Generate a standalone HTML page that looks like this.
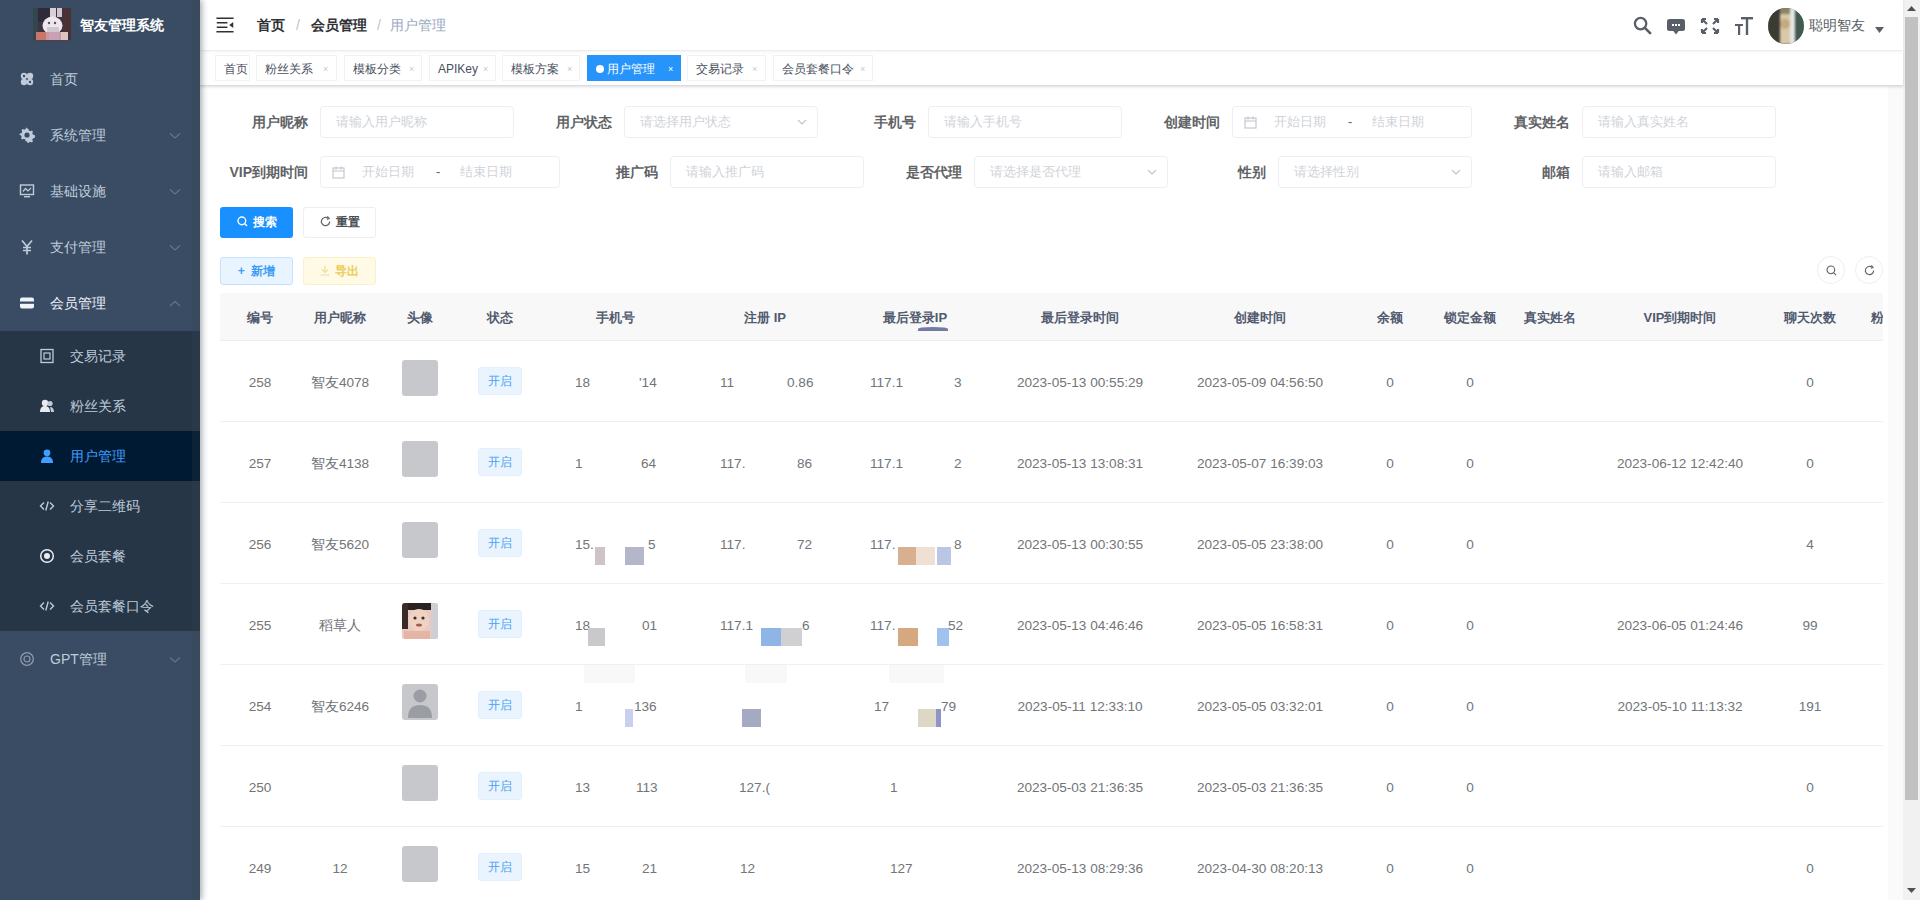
<!DOCTYPE html>
<html><head><meta charset="utf-8">
<style>
*{box-sizing:border-box}
html,body{margin:0;padding:0}
body{width:1920px;height:900px;overflow:hidden;position:relative;background:#fff;font-family:"Liberation Sans",sans-serif;color:#606266;-webkit-font-smoothing:antialiased}
.abs{position:absolute}
#sb{position:absolute;left:0;top:0;width:200px;height:900px;background:#394c64;box-shadow:2px 0 6px rgba(0,21,41,.35);z-index:5}
.mi{position:absolute;left:0;width:200px;height:56px;line-height:56px;color:#bfcbd9;font-size:14px}
.mi .ic{position:absolute;left:19px;top:20px;width:16px;height:16px}
.mi .tx{position:absolute;left:50px;top:0}
.mi .ar{position:absolute;left:169px;top:25px}
.sub{position:absolute;left:0;width:200px;height:50px;line-height:50px;color:#bfcbd9;font-size:14px;background:#263647}
.sub .ic{position:absolute;left:39px;top:17px;width:16px;height:16px}
.sub .tx{position:absolute;left:70px;top:0}
.sub.act{background:#011a33;color:#409eff}
#nav{position:absolute;left:200px;top:0;width:1703px;height:50px;background:#fff;box-shadow:0 1px 4px rgba(0,21,41,.08);z-index:2}
#tags{position:absolute;left:200px;top:51px;width:1703px;height:35px;background:#fff;border-bottom:1px solid #d8dce5;box-shadow:0 1px 3px 0 rgba(0,0,0,.12),0 0 3px 0 rgba(0,0,0,.04);z-index:1}
.tg{position:absolute;top:4px;height:26px;line-height:26px;border:1px solid #f1f2f4;color:#495060;background:#fff;font-size:12px;padding:0 0 0 8px;white-space:nowrap}
.tg .x{position:absolute;font-size:9px;color:#c5c8ce;top:0}
.tg.act{background:#2794fb;border-color:#2794fb;color:#fff}
.lbl{position:absolute;width:100px;height:32px;line-height:32px;text-align:right;padding-right:12px;font-size:14px;font-weight:bold;color:#606266}
.inp{position:absolute;height:32px;line-height:30px;border:1px solid #eceef1;border-radius:4px;background:#fff;font-size:13px;color:#d0d3d8;padding-left:15px;white-space:nowrap;overflow:hidden}
.inp .ph{position:absolute;top:0}
.btn{position:absolute;border-radius:3px;font-size:12px;white-space:nowrap;text-align:center}
.th{position:absolute;top:294px;height:47px;line-height:47px;text-align:center;font-size:13px;font-weight:bold;color:#515a6e;white-space:nowrap;overflow:hidden}
.td{position:absolute;height:20px;line-height:20px;text-align:center;font-size:13.6px;color:#727579;white-space:nowrap}
.fr{position:absolute;height:20px;line-height:20px;font-size:13.6px;color:#727579;white-space:nowrap}
.sq{position:absolute;height:18px}
.rline{position:absolute;left:220px;width:1663px;height:1px;background:#eef0f3}
.av{position:absolute;left:402px;width:36px;height:36px;border-radius:3px;background:#c6c8cc;overflow:hidden}
.tag{position:absolute;left:478px;width:44px;height:28px;line-height:26px;text-align:center;border:1px solid #e3f0fc;background:#e9f4fe;color:#4a9ff5;font-size:12px;border-radius:3px}
</style></head>
<body>

<!-- SIDEBAR -->
<div id="sb">
  <div class="abs" style="left:33px;top:8px;width:38px;height:34px;overflow:hidden">
    <svg width="38" height="34" viewBox="0 0 38 34"><rect width="38" height="34" fill="#3e3440"/><rect x="0" y="0" width="5" height="34" fill="#34454e"/><rect x="30" y="0" width="8" height="30" fill="#4a3234"/><rect x="5" y="0" width="12" height="14" fill="#2f2a3a"/><rect x="17" y="0" width="6" height="9" fill="#d8d0d6"/><rect x="24" y="0" width="5" height="9" fill="#cfc6cf"/><ellipse cx="19.5" cy="17.5" rx="10" ry="9" fill="#efe6ee"/><rect x="14" y="19" width="12" height="6" fill="#cfc8cf"/><circle cx="16" cy="15" r="1.2" fill="#5a5060"/><circle cx="22" cy="15" r="1.2" fill="#5a5060"/><rect x="3" y="24" width="32" height="9" fill="#c99a9a"/><rect x="3" y="24" width="10" height="9" fill="#c8766a"/><rect x="16" y="24" width="10" height="9" fill="#c9a0b8"/><rect x="28" y="24" width="7" height="9" fill="#d9c6c0"/><rect x="0" y="32" width="38" height="2" fill="#4a4450"/></svg>
  </div>
  <div class="abs" style="left:80px;top:0;height:50px;line-height:50px;color:#fff;font-weight:bold;font-size:14px;white-space:nowrap">智友管理系统</div>

  <div class="mi" style="top:51px"><svg class="ic" viewBox="0 0 16 16"><g fill="#bfcbd9"><circle cx="5" cy="5" r="3.2"/><circle cx="11" cy="5" r="3.2"/><circle cx="5" cy="11" r="3.2"/><circle cx="11" cy="11" r="3.2"/></g><g fill="#394c64"><circle cx="5" cy="5" r="1.2"/><circle cx="11" cy="11" r="1.2"/></g></svg><span class="tx">首页</span></div>
  <div class="mi" style="top:107px"><svg class="ic" viewBox="0 0 16 16"><path fill="#bfcbd9" d="M8 1.5l1.4.3.4 1.6 1.5.8 1.6-.6 1 1 -.6 1.6.8 1.5 1.6.4.3 1.4-.3 1.4-1.6.4-.8 1.5.6 1.6-1 1-1.6-.6-1.5.8-.4 1.6L8 14.5l-1.4-.3-.4-1.6-1.5-.8-1.6.6-1-1 .6-1.6-.8-1.5-1.6-.4L.5 8l.3-1.4 1.6-.4.8-1.5-.6-1.6 1-1 1.6.6 1.5-.8.4-1.6z"/><circle cx="8" cy="8" r="2.6" fill="#394c64"/></svg><span class="tx">系统管理</span><svg class="ar" width="12" height="8" viewBox="0 0 12 8"><path d="M1 1.5l5 4.5 5-4.5" stroke="#66768a" stroke-width="1.1" fill="none"/></svg></div>
  <div class="mi" style="top:163px"><svg class="ic" viewBox="0 0 16 16"><rect x="1.5" y="2" width="13" height="9.5" fill="none" stroke="#bfcbd9" stroke-width="1.4"/><path d="M4 8.5l2.5-3 2.5 2.5 3-3" stroke="#bfcbd9" stroke-width="1.2" fill="none"/><rect x="5" y="13" width="6" height="1.4" fill="#bfcbd9"/></svg><span class="tx">基础设施</span><svg class="ar" width="12" height="8" viewBox="0 0 12 8"><path d="M1 1.5l5 4.5 5-4.5" stroke="#66768a" stroke-width="1.1" fill="none"/></svg></div>
  <div class="mi" style="top:219px"><svg class="ic" viewBox="0 0 16 16"><path d="M3 1.5l5 6 5-6M8 7.5v8M4 8.5h8M4 11.5h8" stroke="#bfcbd9" stroke-width="1.7" fill="none"/></svg><span class="tx">支付管理</span><svg class="ar" width="12" height="8" viewBox="0 0 12 8"><path d="M1 1.5l5 4.5 5-4.5" stroke="#66768a" stroke-width="1.1" fill="none"/></svg></div>
  <div class="mi" style="top:275px;color:#fff"><svg class="ic" viewBox="0 0 16 16"><rect x="1" y="2.5" width="14" height="11" rx="2" fill="#f0f3f7"/><rect x="1" y="6.5" width="14" height="2.3" fill="#394c64"/></svg><span class="tx" style="color:#eef2f6">会员管理</span><svg class="ar" width="12" height="8" viewBox="0 0 12 8"><path d="M1 6l5-4.5 5 4.5" stroke="#66768a" stroke-width="1.1" fill="none"/></svg></div>

  <div class="sub" style="top:331px"><svg class="ic" viewBox="0 0 16 16"><rect x="2" y="1.5" width="12" height="13" fill="none" stroke="#bfcbd9" stroke-width="1.3"/><rect x="5" y="5" width="6" height="6" fill="none" stroke="#bfcbd9" stroke-width="1.2"/></svg><span class="tx">交易记录</span></div>
  <div class="sub" style="top:381px"><svg class="ic" viewBox="0 0 16 16"><circle cx="6" cy="5" r="3.2" fill="#e8ecf1"/><path d="M1 14c0-4 2-6 5-6s5 2 5 6z" fill="#e8ecf1"/><circle cx="11" cy="5.5" r="2.6" fill="#bfcbd9"/><path d="M11 9c2.5 0 4 1.5 4 5h-3z" fill="#bfcbd9"/></svg><span class="tx">粉丝关系</span></div>
  <div class="sub act" style="top:431px"><svg class="ic" viewBox="0 0 16 16"><circle cx="8" cy="4.8" r="3.4" fill="#409eff"/><path d="M2 15c0-4.5 2.5-6.5 6-6.5s6 2 6 6.5z" fill="#409eff"/></svg><span class="tx">用户管理</span></div>
  <div class="sub" style="top:481px"><svg class="ic" viewBox="0 0 16 16"><path d="M5 4.5L1.5 8 5 11.5M11 4.5L14.5 8 11 11.5M9.2 3.5l-2.4 9" stroke="#bfcbd9" stroke-width="1.4" fill="none"/></svg><span class="tx">分享二维码</span></div>
  <div class="sub" style="top:531px"><svg class="ic" viewBox="0 0 16 16"><circle cx="8" cy="8" r="6.3" fill="none" stroke="#e8ecf1" stroke-width="1.5"/><circle cx="8" cy="8" r="3" fill="#e8ecf1"/></svg><span class="tx">会员套餐</span></div>
  <div class="sub" style="top:581px"><svg class="ic" viewBox="0 0 16 16"><path d="M5 4.5L1.5 8 5 11.5M11 4.5L14.5 8 11 11.5M9.2 3.5l-2.4 9" stroke="#bfcbd9" stroke-width="1.4" fill="none"/></svg><span class="tx">会员套餐口令</span></div>
  <div class="mi" style="top:631px"><svg class="ic" viewBox="0 0 16 16"><circle cx="8" cy="8" r="6.3" fill="none" stroke="#8e9bab" stroke-width="1.3"/><circle cx="8" cy="8" r="3" fill="none" stroke="#8e9bab" stroke-width="1.2"/></svg><span class="tx">GPT管理</span><svg class="ar" width="12" height="8" viewBox="0 0 12 8"><path d="M1 1.5l5 4.5 5-4.5" stroke="#66768a" stroke-width="1.1" fill="none"/></svg></div>
</div>

<div class="abs" style="left:192px;top:0;width:8px;height:900px;background:rgba(60,66,72,.22);z-index:6"></div>
<!-- NAVBAR -->
<div id="nav">
  <svg class="abs" style="left:14px;top:14px" width="22" height="22" viewBox="0 0 1024 1024"><g transform="rotate(180 512 512)"><path fill="#303133" d="M408 442h480c4.4 0 8-3.6 8-8v-56c0-4.4-3.6-8-8-8H408c-4.4 0-8 3.6-8 8v56c0 4.4 3.6 8 8 8zm-8 204c0 4.4 3.6 8 8 8h480c4.4 0 8-3.6 8-8v-56c0-4.4-3.6-8-8-8H408c-4.4 0-8 3.6-8 8v56zm504-486H120c-4.4 0-8 3.6-8 8v56c0 4.4 3.6 8 8 8h784c4.4 0 8-3.6 8-8v-56c0-4.4-3.6-8-8-8zm0 632H120c-4.4 0-8 3.6-8 8v56c0 4.4 3.6 8 8 8h784c4.4 0 8-3.6 8-8v-56c0-4.4-3.6-8-8-8zM142.4 642.1L298.7 519a8.840 8.840 0 0 0 0-13.9L142.4 381.9c-5.8-4.6-14.400-.5-14.4 6.9v246.3a8.900 8.900 0 0 0 14.4 7z"/></g></svg>
  <div class="abs" style="left:57px;top:0;height:50px;line-height:50px;font-size:14px;white-space:nowrap">
    <span style="color:#303133;font-weight:bold">首页</span><span style="color:#c0c4cc;margin:0 11px">/</span><span style="color:#303133;font-weight:bold">会员管理</span><span style="color:#c0c4cc;margin:0 9px 0 10px">/</span><span style="color:#97a8be">用户管理</span>
  </div>
  <!-- right icons -->
  <svg class="abs" style="left:1433px;top:16px" width="19" height="19" viewBox="0 0 20 20"><circle cx="8" cy="8" r="6" fill="none" stroke="#5a5e66" stroke-width="2.4"/><path d="M12.5 12.5L18 18" stroke="#5a5e66" stroke-width="2.8" stroke-linecap="round"/></svg>
  <svg class="abs" style="left:1467px;top:18px" width="18" height="18" viewBox="0 0 18 18"><rect x="0" y="1" width="18" height="12" rx="2.5" fill="#5a5e66"/><path d="M6 12.5l3 4 3-4z" fill="#5a5e66"/><rect x="5" y="6" width="2" height="2" fill="#fff"/><rect x="8" y="6" width="2" height="2" fill="#fff"/><rect x="11" y="6" width="2" height="2" fill="#fff"/></svg>
  <svg class="abs" style="left:1500px;top:17px" width="20" height="18" viewBox="0 0 20 18"><g stroke="#5a5e66" stroke-width="2.2" fill="none"><path d="M2 2l5 5M2 2h4M2 2v4"/><path d="M18 2l-5 5M18 2h-4M18 2v4"/><path d="M2 16l5-5M2 16h4M2 16v-4"/><path d="M18 16l-5-5M18 16h-4M18 16v-4"/></g></svg>
  <svg class="abs" style="left:1535px;top:17px" width="18" height="18" viewBox="0 0 18 18"><g fill="#5a5e66"><rect x="6" y="0" width="12" height="2.4"/><rect x="10.8" y="0" width="2.4" height="18"/><rect x="0" y="7" width="8" height="2"/><rect x="3" y="7" width="2.2" height="11"/></g></svg>
  <div class="abs" style="left:1568px;top:8px;width:36px;height:36px;border-radius:50%;overflow:hidden;background:#6f6a58">
    <svg style="filter:blur(0.8px)" width="36" height="36" viewBox="0 0 36 36"><rect width="36" height="36" fill="#8d8468"/><rect x="0" y="0" width="12" height="36" fill="#3b3a33"/><rect x="12" y="6" width="10" height="30" fill="#d8c9a8"/><rect x="22" y="0" width="5" height="36" fill="#e6e6e6"/><rect x="27" y="0" width="9" height="36" fill="#405a50"/><circle cx="17" cy="16" r="5" fill="#c4a880"/></svg>
  </div>
  <div class="abs" style="left:1609px;top:0;height:50px;line-height:50px;font-size:14px;color:#5a5e66;white-space:nowrap">聪明智友</div>
  <svg class="abs" style="left:1675px;top:27px" width="9" height="6" viewBox="0 0 9 6"><path d="M0 0h9L4.5 6z" fill="#5a5e66"/></svg>
</div>

<!-- TAGS -->
<div id="tags">
  <div class="tg" style="left:15px;width:35px">首页</div>
  <div class="tg" style="left:56px;width:81px">粉丝关系<span class="x" style="left:66px">×</span></div>
  <div class="tg" style="left:144px;width:78px">模板分类<span class="x" style="left:64px">×</span></div>
  <div class="tg" style="left:229px;width:67px">APIKey<span class="x" style="left:53px">×</span></div>
  <div class="tg" style="left:302px;width:78px">模板方案<span class="x" style="left:64px">×</span></div>
  <div class="tg act" style="left:387px;width:94px"><span style="display:inline-block;width:8px;height:8px;border-radius:50%;background:#fff;margin-right:3px;vertical-align:-0px"></span>用户管理<span class="x" style="left:80px;color:#fff">×</span></div>
  <div class="tg" style="left:487px;width:79px">交易记录<span class="x" style="left:64px">×</span></div>
  <div class="tg" style="left:573px;width:100px">会员套餐口令<span class="x" style="left:86px">×</span></div>
</div>

<!-- FORM -->
<div class="lbl" style="left:220px;top:106px">用户昵称</div>
<div class="inp" style="left:320px;top:106px;width:194px">请输入用户昵称</div>
<div class="lbl" style="left:524px;top:106px">用户状态</div>
<div class="inp" style="left:624px;top:106px;width:194px">请选择用户状态<svg class="abs" style="left:172px;top:12px" width="10" height="7" viewBox="0 0 10 7"><path d="M1 1l4 4 4-4" stroke="#c0c4cc" stroke-width="1.2" fill="none"/></svg></div>
<div class="lbl" style="left:828px;top:106px">手机号</div>
<div class="inp" style="left:928px;top:106px;width:194px">请输入手机号</div>
<div class="lbl" style="left:1132px;top:106px">创建时间</div>
<div class="inp" style="left:1232px;top:106px;width:240px;padding-left:10px"><svg class="abs" style="left:11px;top:9px" width="13" height="13" viewBox="0 0 13 13"><rect x="1" y="2" width="11" height="10" fill="none" stroke="#c0c4cc" stroke-width="1.1"/><path d="M1 5h11M4 0.5v3M9 0.5v3" stroke="#c0c4cc" stroke-width="1.1"/></svg><span class="ph" style="left:41px">开始日期</span><span class="ph" style="left:115px;color:#606266">-</span><span class="ph" style="left:139px">结束日期</span></div>
<div class="lbl" style="left:1482px;top:106px">真实姓名</div>
<div class="inp" style="left:1582px;top:106px;width:194px">请输入真实姓名</div>

<div class="lbl" style="left:220px;top:156px">VIP到期时间</div>
<div class="inp" style="left:320px;top:156px;width:240px;padding-left:10px"><svg class="abs" style="left:11px;top:9px" width="13" height="13" viewBox="0 0 13 13"><rect x="1" y="2" width="11" height="10" fill="none" stroke="#c0c4cc" stroke-width="1.1"/><path d="M1 5h11M4 0.5v3M9 0.5v3" stroke="#c0c4cc" stroke-width="1.1"/></svg><span class="ph" style="left:41px">开始日期</span><span class="ph" style="left:115px;color:#606266">-</span><span class="ph" style="left:139px">结束日期</span></div>
<div class="lbl" style="left:570px;top:156px">推广码</div>
<div class="inp" style="left:670px;top:156px;width:194px">请输入推广码</div>
<div class="lbl" style="left:874px;top:156px">是否代理</div>
<div class="inp" style="left:974px;top:156px;width:194px">请选择是否代理<svg class="abs" style="left:172px;top:12px" width="10" height="7" viewBox="0 0 10 7"><path d="M1 1l4 4 4-4" stroke="#c0c4cc" stroke-width="1.2" fill="none"/></svg></div>
<div class="lbl" style="left:1178px;top:156px">性别</div>
<div class="inp" style="left:1278px;top:156px;width:194px">请选择性别<svg class="abs" style="left:172px;top:12px" width="10" height="7" viewBox="0 0 10 7"><path d="M1 1l4 4 4-4" stroke="#c0c4cc" stroke-width="1.2" fill="none"/></svg></div>
<div class="lbl" style="left:1482px;top:156px">邮箱</div>
<div class="inp" style="left:1582px;top:156px;width:194px">请输入邮箱</div>

<!-- BUTTONS -->
<div class="btn" style="left:220px;top:207px;width:73px;height:31px;line-height:31px;background:#1890ff;color:#fff;font-weight:bold"><svg style="vertical-align:-1px;margin-right:5px" width="11" height="11" viewBox="0 0 12 12"><circle cx="5.3" cy="5.3" r="4.2" fill="none" stroke="#fff" stroke-width="1.5"/><path d="M8.5 8.5l2.5 2.5" stroke="#fff" stroke-width="1.5"/></svg>搜索</div>
<div class="btn" style="left:303px;top:207px;width:73px;height:31px;line-height:29px;background:#fff;border:1px solid #eceef1;color:#4a4d52;font-weight:bold"><svg style="vertical-align:-1px;margin-right:5px" width="11" height="11" viewBox="0 0 12 12"><path d="M10.5 6A4.5 4.5 0 1 1 8.8 2.5" fill="none" stroke="#606266" stroke-width="1.3"/><path d="M8 0.5l2 2.2-2.4 1" fill="none" stroke="#606266" stroke-width="1.2"/></svg>重置</div>
<div class="btn" style="left:220px;top:257px;width:73px;height:28px;line-height:26px;background:#e8f4ff;border:1px solid #c6e2fb;color:#3d9cf5;font-weight:bold">+&nbsp; 新增</div>
<div class="btn" style="left:303px;top:257px;width:73px;height:28px;line-height:26px;background:#fefae6;border:1px solid #fbf0c8;color:#eccb55;font-weight:bold"><svg style="vertical-align:-1px;margin-right:5px" width="10" height="11" viewBox="0 0 10 11"><path d="M5 0.5v7M2 4.5l3 3 3-3M0.5 10h9" stroke="#f0dc9a" stroke-width="1.2" fill="none"/></svg>导出</div>
<div class="abs" style="left:1817px;top:256px;width:28px;height:28px;border-radius:50%;border:1px solid #eceef1;background:#fff"><svg class="abs" style="left:8px;top:8px" width="11" height="11" viewBox="0 0 12 12"><circle cx="5.3" cy="5.3" r="4.2" fill="none" stroke="#606266" stroke-width="1.2"/><path d="M8.5 8.5l2.5 2.5" stroke="#606266" stroke-width="1.2"/></svg></div>
<div class="abs" style="left:1855px;top:256px;width:28px;height:28px;border-radius:50%;border:1px solid #eceef1;background:#fff"><svg class="abs" style="left:8px;top:8px" width="11" height="11" viewBox="0 0 12 12"><path d="M10.5 6A4.5 4.5 0 1 1 8.8 2.5" fill="none" stroke="#606266" stroke-width="1.2"/><path d="M8 0.5l2 2.2-2.4 1" fill="none" stroke="#606266" stroke-width="1.1"/></svg></div>

<!-- TABLE -->
<div class="abs" style="left:220px;top:293px;width:1663px;height:48px;background:#f8f8f9;border-bottom:1px solid #eceef2"></div>
<div class="abs" style="left:918px;top:327px;width:30px;height:4px;border-radius:50% 50% 0 0;background:#515a8e;opacity:.8"></div>
<div style="position:absolute;left:0;top:0;width:1883px;height:900px;overflow:hidden">
<div class="th" style="left:220px;width:80px">编号</div>
<div class="th" style="left:300px;width:80px">用户昵称</div>
<div class="th" style="left:380px;width:80px">头像</div>
<div class="th" style="left:460px;width:80px">状态</div>
<div class="th" style="left:540px;width:150px">手机号</div>
<div class="th" style="left:690px;width:150px">注册 IP</div>
<div class="th" style="left:840px;width:150px">最后登录IP</div>
<div class="th" style="left:990px;width:180px">最后登录时间</div>
<div class="th" style="left:1170px;width:180px">创建时间</div>
<div class="th" style="left:1350px;width:80px">余额</div>
<div class="th" style="left:1430px;width:80px">锁定金额</div>
<div class="th" style="left:1510px;width:80px">真实姓名</div>
<div class="th" style="left:1590px;width:180px">VIP到期时间</div>
<div class="th" style="left:1770px;width:80px">聊天次数</div>
<div class="th" style="left:1850px;width:80px">粉丝数</div>
<div class="rline" style="top:421px"></div>
<div class="td" style="left:220px;width:80px;top:373px">258</div>
<div class="td" style="left:300px;width:80px;top:373px">智友4078</div>
<div class="av" style="top:360px"></div>
<div class="tag" style="top:367px">开启</div>
<div class="td" style="left:990px;width:180px;top:373px">2023-05-13 00:55:29</div>
<div class="td" style="left:1170px;width:180px;top:373px">2023-05-09 04:56:50</div>
<div class="td" style="left:1350px;width:80px;top:373px">0</div>
<div class="td" style="left:1430px;width:80px;top:373px">0</div>
<div class="td" style="left:1770px;width:80px;top:373px">0</div>
<div class="rline" style="top:502px"></div>
<div class="td" style="left:220px;width:80px;top:454px">257</div>
<div class="td" style="left:300px;width:80px;top:454px">智友4138</div>
<div class="av" style="top:441px"></div>
<div class="tag" style="top:448px">开启</div>
<div class="td" style="left:990px;width:180px;top:454px">2023-05-13 13:08:31</div>
<div class="td" style="left:1170px;width:180px;top:454px">2023-05-07 16:39:03</div>
<div class="td" style="left:1350px;width:80px;top:454px">0</div>
<div class="td" style="left:1430px;width:80px;top:454px">0</div>
<div class="td" style="left:1590px;width:180px;top:454px">2023-06-12 12:42:40</div>
<div class="td" style="left:1770px;width:80px;top:454px">0</div>
<div class="rline" style="top:583px"></div>
<div class="td" style="left:220px;width:80px;top:535px">256</div>
<div class="td" style="left:300px;width:80px;top:535px">智友5620</div>
<div class="av" style="top:522px"></div>
<div class="tag" style="top:529px">开启</div>
<div class="td" style="left:990px;width:180px;top:535px">2023-05-13 00:30:55</div>
<div class="td" style="left:1170px;width:180px;top:535px">2023-05-05 23:38:00</div>
<div class="td" style="left:1350px;width:80px;top:535px">0</div>
<div class="td" style="left:1430px;width:80px;top:535px">0</div>
<div class="td" style="left:1770px;width:80px;top:535px">4</div>
<div class="rline" style="top:664px"></div>
<div class="td" style="left:220px;width:80px;top:616px">255</div>
<div class="td" style="left:300px;width:80px;top:616px">稻草人</div>
<div class="av ph" style="top:603px"><svg style="filter:blur(0.6px)" width="36" height="36" viewBox="0 0 36 36"><rect width="36" height="36" fill="#e9c9c0"/><rect x="0" y="0" width="36" height="7" fill="#2a2222"/><rect x="0" y="0" width="6" height="26" fill="#3a2a28"/><rect x="29" y="0" width="7" height="36" fill="#cfcfd3"/><ellipse cx="17" cy="17" rx="10" ry="11" fill="#f0d2c2"/><circle cx="13" cy="15" r="1.6" fill="#3b2a2a"/><circle cx="21" cy="15" r="1.6" fill="#3b2a2a"/><ellipse cx="17" cy="22" rx="3" ry="1.6" fill="#a55a50"/><rect x="2" y="28" width="26" height="8" fill="#e4b4a6"/></svg></div>
<div class="tag" style="top:610px">开启</div>
<div class="td" style="left:990px;width:180px;top:616px">2023-05-13 04:46:46</div>
<div class="td" style="left:1170px;width:180px;top:616px">2023-05-05 16:58:31</div>
<div class="td" style="left:1350px;width:80px;top:616px">0</div>
<div class="td" style="left:1430px;width:80px;top:616px">0</div>
<div class="td" style="left:1590px;width:180px;top:616px">2023-06-05 01:24:46</div>
<div class="td" style="left:1770px;width:80px;top:616px">99</div>
<div class="rline" style="top:745px"></div>
<div class="td" style="left:220px;width:80px;top:697px">254</div>
<div class="td" style="left:300px;width:80px;top:697px">智友6246</div>
<div class="av" style="top:684px"><svg width="36" height="36" viewBox="0 0 36 36"><circle cx="18" cy="12" r="6.5" fill="#9a9da3"/><path d="M6 34 C6 24 11 21 18 21 C25 21 30 24 30 34 Z" fill="#9a9da3"/></svg></div>
<div class="tag" style="top:691px">开启</div>
<div class="td" style="left:990px;width:180px;top:697px">2023-05-11 12:33:10</div>
<div class="td" style="left:1170px;width:180px;top:697px">2023-05-05 03:32:01</div>
<div class="td" style="left:1350px;width:80px;top:697px">0</div>
<div class="td" style="left:1430px;width:80px;top:697px">0</div>
<div class="td" style="left:1590px;width:180px;top:697px">2023-05-10 11:13:32</div>
<div class="td" style="left:1770px;width:80px;top:697px">191</div>
<div class="rline" style="top:826px"></div>
<div class="td" style="left:220px;width:80px;top:778px">250</div>
<div class="td" style="left:300px;width:80px;top:778px"></div>
<div class="av" style="top:765px"></div>
<div class="tag" style="top:772px">开启</div>
<div class="td" style="left:990px;width:180px;top:778px">2023-05-03 21:36:35</div>
<div class="td" style="left:1170px;width:180px;top:778px">2023-05-03 21:36:35</div>
<div class="td" style="left:1350px;width:80px;top:778px">0</div>
<div class="td" style="left:1430px;width:80px;top:778px">0</div>
<div class="td" style="left:1770px;width:80px;top:778px">0</div>
<div class="rline" style="top:907px"></div>
<div class="td" style="left:220px;width:80px;top:859px">249</div>
<div class="td" style="left:300px;width:80px;top:859px">12</div>
<div class="av" style="top:846px"></div>
<div class="tag" style="top:853px">开启</div>
<div class="td" style="left:990px;width:180px;top:859px">2023-05-13 08:29:36</div>
<div class="td" style="left:1170px;width:180px;top:859px">2023-04-30 08:20:13</div>
<div class="td" style="left:1350px;width:80px;top:859px">0</div>
<div class="td" style="left:1430px;width:80px;top:859px">0</div>
<div class="td" style="left:1770px;width:80px;top:859px">0</div>
<div class="fr" style="left:575px;top:373px">18</div>
<div class="fr" style="left:639px;top:373px">&#x27;14</div>
<div class="fr" style="left:720px;top:373px">11</div>
<div class="fr" style="left:787px;top:373px">0.86</div>
<div class="fr" style="left:870px;top:373px">117.1</div>
<div class="fr" style="left:954px;top:373px">3</div>
<div class="fr" style="left:575px;top:454px">1</div>
<div class="fr" style="left:641px;top:454px">64</div>
<div class="fr" style="left:720px;top:454px">117.</div>
<div class="fr" style="left:797px;top:454px">86</div>
<div class="fr" style="left:870px;top:454px">117.1</div>
<div class="fr" style="left:954px;top:454px">2</div>
<div class="fr" style="left:575px;top:535px">15.</div>
<div class="fr" style="left:648px;top:535px">5</div>
<div class="fr" style="left:720px;top:535px">117.</div>
<div class="fr" style="left:797px;top:535px">72</div>
<div class="fr" style="left:870px;top:535px">117.</div>
<div class="fr" style="left:954px;top:535px">8</div>
<div class="fr" style="left:575px;top:616px">18</div>
<div class="fr" style="left:642px;top:616px">01</div>
<div class="fr" style="left:720px;top:616px">117.1</div>
<div class="fr" style="left:802px;top:616px">6</div>
<div class="fr" style="left:870px;top:616px">117.</div>
<div class="fr" style="left:948px;top:616px">52</div>
<div class="fr" style="left:575px;top:697px">1</div>
<div class="fr" style="left:634px;top:697px">136</div>
<div class="fr" style="left:874px;top:697px">17</div>
<div class="fr" style="left:941px;top:697px">79</div>
<div class="fr" style="left:575px;top:778px">13</div>
<div class="fr" style="left:636px;top:778px">113</div>
<div class="fr" style="left:739px;top:778px">127.(</div>
<div class="fr" style="left:890px;top:778px">1</div>
<div class="fr" style="left:575px;top:859px">15</div>
<div class="fr" style="left:642px;top:859px">21</div>
<div class="fr" style="left:740px;top:859px">12</div>
<div class="fr" style="left:890px;top:859px">127</div>
<div class="sq" style="left:595px;width:10px;top:547px;background:#cfc3c6"></div>
<div class="sq" style="left:625px;width:19px;top:547px;background:#b4b7c9"></div>
<div class="sq" style="left:898px;width:18px;top:547px;background:#d9b08f"></div>
<div class="sq" style="left:916px;width:19px;top:547px;background:#eee1d3"></div>
<div class="sq" style="left:937px;width:14px;top:547px;background:#b9c6e6"></div>
<div class="sq" style="left:588px;width:17px;top:628px;background:#c9c8ca"></div>
<div class="sq" style="left:761px;width:20px;top:628px;background:#8fb5e6"></div>
<div class="sq" style="left:781px;width:21px;top:628px;background:#d0d0d2"></div>
<div class="sq" style="left:898px;width:20px;top:628px;background:#d6a882"></div>
<div class="sq" style="left:937px;width:12px;top:628px;background:#9fc3ee"></div>
<div class="sq" style="left:625px;width:8px;top:709px;background:#c9cfef"></div>
<div class="sq" style="left:742px;width:19px;top:709px;background:#a6a9c2"></div>
<div class="sq" style="left:918px;width:20px;top:709px;background:#ddd8c6"></div>
<div class="sq" style="left:936px;width:5px;top:709px;background:#8e93c9"></div>
<div class="abs" style="left:584px;top:665px;width:51px;height:18px;background:#f8f8f9"></div>
<div class="abs" style="left:745px;top:665px;width:42px;height:18px;background:#f8f8f9"></div>
<div class="abs" style="left:889px;top:665px;width:55px;height:18px;background:#f8f8f9"></div>
</div>

<!-- SCROLLBAR -->
<div class="abs" style="left:1888px;top:86px;width:15px;height:814px;background:#fafafa"></div>
<div class="abs" style="left:1903px;top:0;width:17px;height:900px;background:#f1f1f1"></div>
<div class="abs" style="left:1905px;top:17px;width:13px;height:783px;background:#c1c1c1"></div>
<svg class="abs" style="left:1907px;top:6px" width="9" height="5" viewBox="0 0 9 5"><path d="M0 5h9L4.5 0z" fill="#505050"/></svg>
<svg class="abs" style="left:1907px;top:888px" width="9" height="5" viewBox="0 0 9 5"><path d="M0 0h9L4.5 5z" fill="#505050"/></svg>
</body></html>
